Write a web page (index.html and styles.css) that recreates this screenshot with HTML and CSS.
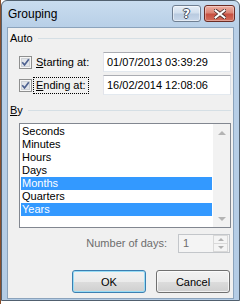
FILE: index.html
```html
<!DOCTYPE html>
<html lang="en">
<head>
    <meta charset="UTF-8">
    <meta name="viewport" content="width=device-width, initial-scale=1.0">
    <title>Grouping</title>
    <link rel="stylesheet" href="styles.css">
</head>
<body>
    <div class="window">
        <div class="titlebar">
            <span class="title">Grouping</span>
            <div class="caption">
                <div class="cap help"><span>?</span></div>
                <div class="cap close">
                    <svg width="12" height="10" viewBox="0 0 12 10">
                        <path d="M1.5 1.5l9 7M10.5 1.5l-9 7" stroke="#4a2c2a" stroke-width="3.6" stroke-linecap="square"/>
                        <path d="M1.5 1.5l9 7M10.5 1.5l-9 7" stroke="#fff" stroke-width="2" stroke-linecap="square"/>
                    </svg>
                </div>
            </div>
        </div>

        <div class="client">
            <div class="group group-auto">
                <span>Auto</span>
                <div class="rule"></div>
            </div>

            <div class="row row-first">
                <svg class="check" width="13" height="13" viewBox="0 0 13 13">
                    <rect x="0.5" y="0.5" width="12" height="12" fill="#f6f6f6" stroke="#8e8f8f"/>
                    <rect x="2.5" y="2.5" width="8" height="8" fill="#e2e5ea" stroke="#cdd1d6"/>
                    <path d="M3.2 6.3l2.3 2.6 4.3-5.6" fill="none" stroke="#4d6190" stroke-width="1.7"/>
                </svg>
                <span class="lbl"><u>S</u>tarting at:</span>
                <div class="textbox">01/07/2013 03:39:29</div>
            </div>

            <div class="row">
                <svg class="check" width="13" height="13" viewBox="0 0 13 13">
                    <rect x="0.5" y="0.5" width="12" height="12" fill="#f6f6f6" stroke="#8e8f8f"/>
                    <rect x="2.5" y="2.5" width="8" height="8" fill="#e2e5ea" stroke="#cdd1d6"/>
                    <path d="M3.2 6.3l2.3 2.6 4.3-5.6" fill="none" stroke="#4d6190" stroke-width="1.7"/>
                </svg>
                <span class="lbl focus"><u>E</u>nding at:</span>
                <div class="textbox">16/02/2014 12:08:06</div>
            </div>

            <div class="group group-by">
                <span><u>B</u>y</span>
                <div class="rule"></div>
            </div>

            <div class="listbox">
                <div class="items">
                    <div class="item">Seconds</div>
                    <div class="item">Minutes</div>
                    <div class="item">Hours</div>
                    <div class="item">Days</div>
                    <div class="item selected">Months</div>
                    <div class="item">Quarters</div>
                    <div class="item selected">Years</div>
                </div>
                <div class="scrollbar">
                    <div class="arrow up"></div>
                    <div class="arrow down"></div>
                </div>
            </div>

            <div class="days">
                <span class="disabled">Number of days:</span>
                <div class="spin">
                    <span class="spin-value">1</span>
                    <div class="spin-btns">
                        <div class="spin-btn"><i class="tri up"></i></div>
                        <div class="spin-btn"><i class="tri down"></i></div>
                    </div>
                </div>
            </div>

            <div class="actions">
                <button class="btn default">OK</button>
                <button class="btn">Cancel</button>
            </div>
        </div>
    </div>
</body>
</html>
```

FILE: styles.css
```css
body {
    margin: 0;
    width: 240px;
    height: 304px;
    overflow: hidden;
    background: linear-gradient(to right, #8a4f2c 0 1px, #ffffff 1px);
    font-family: "Liberation Sans", Arial, sans-serif;
    font-size: 11px;
    color: #000;
}

.window {
    margin-left: 1px;
    width: 239px;
    height: 301px;
    box-sizing: border-box;
    border: 1px solid #51606f;
    border-radius: 6px 6px 0 0;
    background: linear-gradient(#c9dcef, #b8cfe7 26px, #b4cce5);
    padding: 0 5px 1px;
    display: flex;
    flex-direction: column;
}

.titlebar {
    height: 26px;
    margin: 0 -5px;
    padding: 0 4px 0 6px;
    display: flex;
    align-items: flex-start;
}

.title {
    margin-top: 6px;
    font-size: 12px;
    line-height: 15px;
}

.caption {
    margin-left: auto;
    margin-top: 4px;
    display: flex;
}

.cap {
    height: 17px;
    box-sizing: border-box;
    border-radius: 3px;
    display: flex;
    justify-content: center;
    align-items: center;
}

.help {
    width: 29px;
    margin-right: 3px;
    border: 1px solid #6f7f92;
    background: linear-gradient(#e6eef7, #d2dfed 45%, #b9cbe0 55%, #c9d8ea);
    box-shadow: inset 0 0 0 1px rgba(255, 255, 255, 0.5);
}

.help span {
    font-family: "DejaVu Sans", sans-serif;
    font-weight: bold;
    font-size: 12px;
    line-height: 12px;
    color: #fff;
    text-shadow: 1px 0 0 #3f4d5e, -1px 0 0 #3f4d5e, 0 1px 0 #3f4d5e, 0 -1px 0 #3f4d5e;
}

.close {
    width: 31px;
    border: 1px solid #6b2c25;
    background: linear-gradient(#eeb0a4, #db8576 45%, #c74f40 55%, #d3705e);
    box-shadow: inset 0 0 0 1px rgba(255, 255, 255, 0.35);
}

.client {
    flex: 1;
    background: #f0f0f0;
    border: 1px solid #8ba3bc;
    padding: 0 2px;
    display: flex;
    flex-direction: column;
}

.group {
    height: 13px;
    line-height: 13px;
    display: flex;
    align-items: center;
}

.group-auto {
    margin-top: 4px;
}

.group-by {
    margin-top: 9px;
}

.rule {
    flex: 1;
    height: 1px;
    margin-left: 5px;
    background: #d5dfe5;
}

.row {
    height: 20px;
    margin-top: 3px;
    display: flex;
    align-items: center;
}

.row-first {
    margin-top: 7px;
}

.check {
    margin-left: 9px;
    flex: none;
}

.lbl {
    margin-left: 1px;
    padding: 1px 2px;
    line-height: 13px;
    border: 1px dotted transparent;
}

.lbl.focus {
    border-color: #000;
}

.textbox {
    margin-left: auto;
    width: 128px;
    height: 20px;
    box-sizing: border-box;
    padding-left: 3px;
    line-height: 18px;
    background: #fff;
    border: 1px solid;
    border-color: #abadb3 #dbdfe6 #e3e9ef #e2e3ea;
}

.listbox {
    margin-top: 6px;
    margin-left: 9px;
    height: 105px;
    box-sizing: border-box;
    border: 1px solid #828790;
    background: #fff;
    display: flex;
}

.items {
    flex: 1;
    padding: 1px;
}

.item {
    height: 13px;
    line-height: 13px;
    padding-left: 1px;
}

.item.selected {
    background: #3399ff;
    color: #fff;
}

.scrollbar {
    width: 17px;
    background: #f2f2f2;
    display: flex;
    flex-direction: column;
    justify-content: space-between;
}

.arrow {
    height: 17px;
    display: flex;
    justify-content: center;
    align-items: center;
}

.arrow::before {
    content: "";
    border-left: 4px solid transparent;
    border-right: 4px solid transparent;
}

.arrow.up::before {
    border-bottom: 4px solid #b4b4b4;
}

.arrow.down::before {
    border-top: 4px solid #b4b4b4;
}

.days {
    margin-top: 6px;
    display: flex;
    justify-content: flex-end;
    align-items: center;
}

.disabled {
    color: #6d6d6d;
    line-height: 13px;
}

.spin {
    margin: 0 1px 0 11px;
    width: 52px;
    height: 19px;
    box-sizing: border-box;
    border: 1px solid #c3c6ca;
    background: #f4f4f4;
    display: flex;
}

.spin-value {
    flex: 1;
    padding-left: 4px;
    line-height: 17px;
    color: #6d6d6d;
}

.spin-btns {
    width: 15px;
    margin: 0 1px;
    display: flex;
    flex-direction: column;
}

.spin-btn {
    flex: 1;
    border: 1px solid #d9d9d9;
    background: #f4f4f4;
    display: flex;
    justify-content: center;
    align-items: center;
}

.spin-btn + .spin-btn {
    border-top: none;
}

.tri {
    border-left: 3px solid transparent;
    border-right: 3px solid transparent;
}

.tri.up {
    border-bottom: 3px solid #b0b0b0;
}

.tri.down {
    border-top: 3px solid #b0b0b0;
}

.actions {
    margin-top: 17px;
    display: flex;
    justify-content: flex-end;
}

.btn {
    width: 74px;
    height: 23px;
    margin: 0;
    padding: 0;
    font-family: inherit;
    font-size: 11px;
    color: #000;
    border: 1px solid #707070;
    border-radius: 3px;
    background: linear-gradient(#f2f2f2, #ebebeb 50%, #dddddd 50%, #cfcfcf);
    box-shadow: inset 0 0 0 1px rgba(255, 255, 255, 0.7);
}

.btn + .btn {
    margin-left: 10px;
    margin-right: 1px;
}

.btn.default {
    border-color: #3c7fb1;
    box-shadow: inset 0 0 0 1px #98dcf5;
}
```
